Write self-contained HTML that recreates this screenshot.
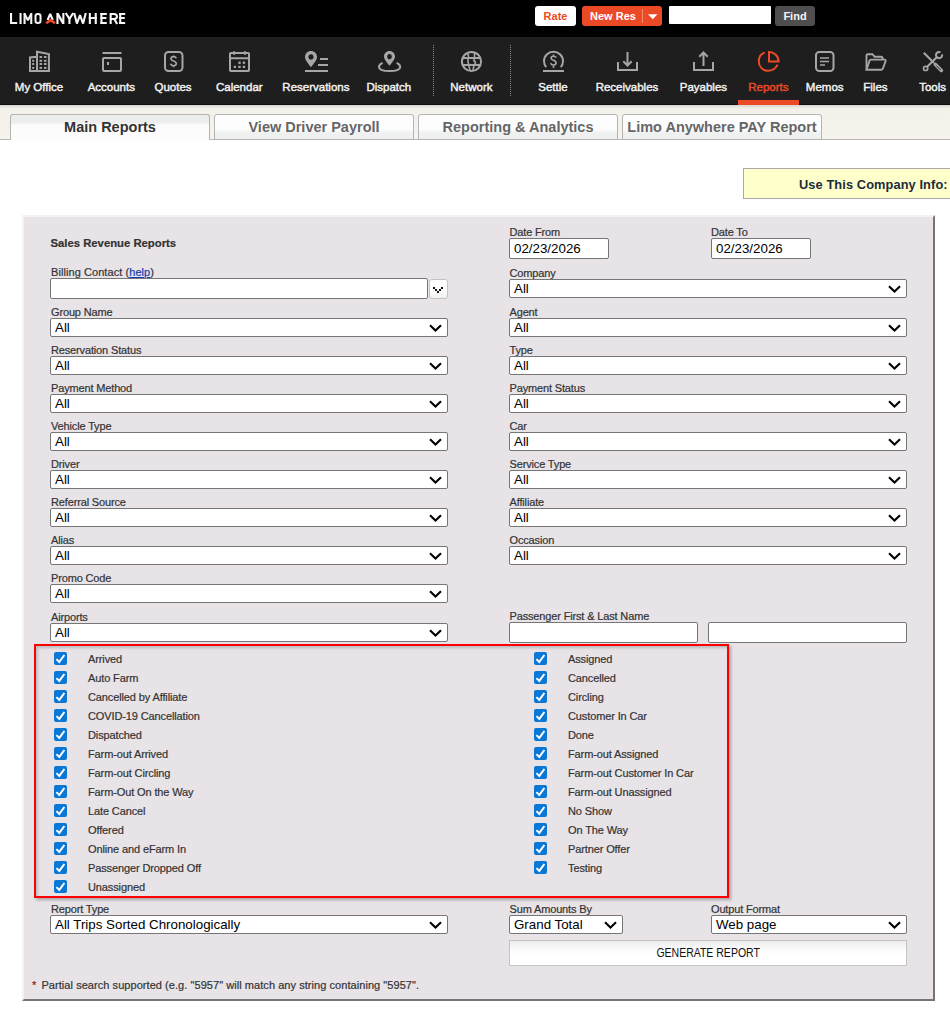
<!DOCTYPE html>
<html><head><meta charset="utf-8"><style>
*{box-sizing:border-box;margin:0;padding:0}
html,body{width:950px;height:1013px;overflow:hidden;background:#fff;font-family:"Liberation Sans",sans-serif}
.a{position:absolute}
.nl{position:absolute;top:80px;width:100px;text-align:center;color:#f3f3f3;font-size:11.5px;line-height:14px;white-space:nowrap;-webkit-text-stroke:0.42px currentColor}
.tab{position:absolute;top:114px;width:200px;height:26px;border:1px solid #b3b3b3;border-radius:3px 3px 0 0;background:linear-gradient(#fdfdfd 0,#fdfdfd 60%,#eff0f0 75%,#eff0f0);font-weight:bold;font-size:14.5px;color:#666;text-align:center;line-height:24px;white-space:nowrap}
.tab.act{border-bottom:none;background:linear-gradient(#eceeee 0,#eceeee 30%,#fcfcfc 40%,#fcfcfc);color:#333}
.lb{position:absolute;font-size:11px;color:#333;line-height:13px;white-space:nowrap;letter-spacing:-0.15px;-webkit-text-stroke:0.2px #333}
.sel{position:absolute;height:19px;background:#fff;border:1px solid #767676;border-radius:2px;font-size:13.333px;color:#000;line-height:17px;padding-left:4px;white-space:nowrap}
.sel svg{position:absolute;right:5px;top:5px}
.inp{position:absolute;height:21px;background:#fff;border:1px solid #767676;border-radius:2px;font-size:13.333px;color:#000;line-height:19px;padding-left:4px}
.cb{position:absolute;width:13px;height:13px;background:#0a77d5;border-radius:2px}
.cb svg{position:absolute;left:0;top:0}
.cl{position:absolute;font-size:11px;color:#333;line-height:13px;white-space:nowrap;letter-spacing:-0.12px;-webkit-text-stroke:0.2px #333}

</style></head><body>
<div class="a" style="left:0;top:0;width:950px;height:37px;background:#000"></div>
<svg class="a" style="left:0;top:0" width="140" height="37">
<g fill="#f6f6f6">
<rect x="10" y="13" width="2.1" height="11"/><rect x="10" y="22" width="7.2" height="2"/>
<rect x="19.5" y="13" width="2.1" height="11"/>
<rect x="23.5" y="13" width="2.1" height="11"/><rect x="30.2" y="13" width="2.1" height="11"/>
<rect x="56.4" y="13" width="2.1" height="11"/><rect x="62.3" y="13" width="2.1" height="11"/>
<rect x="68.4" y="18.5" width="2.1" height="5.5"/>
<rect x="88.8" y="13" width="2.1" height="11"/><rect x="94.7" y="13" width="2.1" height="11"/><rect x="88.8" y="17" width="8" height="2"/>
<rect x="100.4" y="13" width="2.1" height="11"/><rect x="100.4" y="13" width="6.4" height="2"/><rect x="100.4" y="17" width="6" height="2"/><rect x="100.4" y="22" width="6.4" height="2"/>
<rect x="109.6" y="13" width="2.1" height="11"/>
<rect x="119.2" y="13" width="2.1" height="11"/><rect x="119.2" y="13" width="6" height="2"/><rect x="119.2" y="17" width="5.6" height="2"/><rect x="119.2" y="22" width="6" height="2"/>
</g>
<g fill="none" stroke="#f6f6f6" stroke-width="2.1" stroke-linejoin="miter" stroke-miterlimit="1.6">
<path d="M24.6 14 L27.9 20.2 L31.2 14"/>
<rect x="35.5" y="14" width="5" height="9" rx="2.3" stroke-width="2"/>
<path d="M47.6 20 L50.2 13.8 L52.8 20"/>
<path d="M57.6 13.6 L63.2 23.4" stroke-width="2.3"/>
<path d="M65.7 13 L69.45 18.9 L73.2 13"/>
<path d="M74.2 13 L76.9 23.6 L80 15.2 L83.1 23.6 L85.8 13"/>
<path d="M110.6 14 H114 C116.1 14 117 15.1 117 16.5 C117 17.9 116.1 18.9 114 18.9 H110.6" stroke-width="2"/>
<path d="M114.3 19 L117.1 24" stroke-width="2.2"/>
<path d="M46.2 23.3 L50.6 20.1 L55 23.3" stroke="#ec4a26" stroke-width="2.6"/>
</g>
</svg>
<div class="a" style="left:535px;top:6px;width:41px;height:20px;background:#fff;border-radius:3px;color:#ec4a26;font-weight:bold;font-size:11px;line-height:20px;text-align:center">Rate</div>
<div class="a" style="left:582px;top:6px;width:80px;height:20px;background:#ec4a26;border-radius:3px"></div>
<div class="a" style="left:589px;top:6px;width:48px;height:20px;color:#fff;font-weight:bold;font-size:11px;line-height:20px;text-align:center;white-space:nowrap">New Res</div>
<div class="a" style="left:642px;top:9px;width:1px;height:14px;background:#f58a72"></div>
<svg class="a" style="left:647px;top:13px" width="12" height="8"><path d="M1 1.2 H10.5 L5.75 6.2Z" fill="#fff"/></svg>
<div class="a" style="left:669px;top:6px;width:102px;height:18px;background:#fff;border-radius:1px"></div>
<div class="a" style="left:775px;top:6px;width:40px;height:20px;background:#4e4e4e;border-radius:3px;color:#f4f4f4;font-weight:bold;font-size:11px;line-height:20px;text-align:center">Find</div>
<div class="a" style="left:0;top:37px;width:950px;height:68px;background:#1e1e1e;border-bottom:1px solid #0e0e0e"></div>
<div class="nl" style="left:-11.0px;color:#f3f3f3">My Office</div>
<div class="nl" style="left:61.3px;color:#f3f3f3">Accounts</div>
<div class="nl" style="left:123.0px;color:#f3f3f3">Quotes</div>
<div class="nl" style="left:189.3px;color:#f3f3f3">Calendar</div>
<div class="nl" style="left:265.9px;color:#f3f3f3">Reservations</div>
<div class="nl" style="left:338.8px;color:#f3f3f3">Dispatch</div>
<div class="nl" style="left:421.4px;color:#f3f3f3">Network</div>
<div class="nl" style="left:503.0px;color:#f3f3f3">Settle</div>
<div class="nl" style="left:577.0px;color:#f3f3f3">Receivables</div>
<div class="nl" style="left:653.4px;color:#f3f3f3">Payables</div>
<div class="nl" style="left:718.4px;color:#ec4a26">Reports</div>
<div class="nl" style="left:774.7px;color:#f3f3f3">Memos</div>
<div class="nl" style="left:825.4px;color:#f3f3f3">Files</div>
<div class="nl" style="left:882.6px;color:#f3f3f3">Tools</div>
<div class="a" style="left:433px;top:45px;width:1px;height:51px;background:repeating-linear-gradient(#8a8a8a 0 1px,transparent 1px 2px)"></div>
<div class="a" style="left:510px;top:45px;width:1px;height:51px;background:repeating-linear-gradient(#8a8a8a 0 1px,transparent 1px 2px)"></div>
<div class="a" style="left:738px;top:100px;width:61px;height:5px;background:#ec4a26"></div>
<svg class="a" style="left:0;top:0" width="950" height="105" fill="none" stroke="#a6a6a6" stroke-width="2">
<!-- my office -->
<path d="M30 71 V57.5 L37 56.8 M37 71 V51.8 L48.9 54 V71 M29 71 H50"/>
<g fill="#a6a6a6" stroke="none">
<rect x="32.2" y="59.8" width="2" height="2"/><rect x="32.2" y="63" width="2" height="2"/><rect x="32.2" y="66.9" width="2" height="2"/>
<rect x="39.5" y="56" width="2.6" height="2"/><rect x="43.9" y="56" width="2.6" height="2"/>
<rect x="39.5" y="59.8" width="2.6" height="2"/><rect x="43.9" y="59.8" width="2.6" height="2"/>
<rect x="39.5" y="63" width="2.6" height="2"/><rect x="43.9" y="63" width="2.6" height="2"/>
<rect x="39.5" y="66.9" width="2.6" height="2"/><rect x="43.9" y="66.9" width="2.6" height="2"/>
</g>
<!-- accounts -->
<path d="M102.5 53 H121.5"/>
<rect x="103" y="58" width="18" height="13" rx="1"/>
<rect x="107" y="62" width="2" height="3" fill="#a6a6a6" stroke="none"/>
<!-- quotes -->
<rect x="165" y="52" width="17.5" height="19" rx="3.5"/>
<path d="M176.3 58.2 C175.8 56.8 174.8 56.6 173.5 56.6 C171.9 56.6 171 57.5 171 58.8 C171 61.6 176.3 60.4 176.3 63.6 C176.3 65 175.3 65.8 173.6 65.8 C172 65.8 171 65.2 170.6 63.8 M173.6 55.5 V57 M173.6 65.5 V67.2" stroke-width="1.6"/>
<!-- calendar -->
<rect x="230" y="53" width="19" height="18" rx="0.8"/>
<path d="M230 58.3 H249 M234.2 51.2 V54.8 M244.9 51.2 V54.8"/>
<g fill="#a6a6a6" stroke="none">
<rect x="238.3" y="61.6" width="2.4" height="2.3"/><rect x="242.8" y="61.6" width="2.3" height="2.3"/>
<rect x="233.8" y="65.8" width="2.2" height="2.2"/><rect x="238.3" y="65.8" width="2.4" height="2.2"/><rect x="242.8" y="65.8" width="2.3" height="2.2"/>
</g>
<!-- reservations -->
<path fill="#a6a6a6" stroke="none" fill-rule="evenodd" d="M311 51 C314.4 51 317 53.6 317 57 C317 60 313.5 64 311 67.2 C308.5 64 305 60 305 57 C305 53.6 307.6 51 311 51Z M311 54.2 C312.5 54.2 313.6 55.4 313.6 56.9 C313.6 58.4 312.5 59.6 311 59.6 C309.5 59.6 308.4 58.4 308.4 56.9 C308.4 55.4 309.5 54.2 311 54.2Z"/>
<path d="M320 59 H328 M318 65 H328 M305 71 H328"/>
<!-- dispatch -->
<path fill="#a6a6a6" stroke="none" fill-rule="evenodd" d="M389.5 51 C392.6 51 395 53.4 395 56.5 C395 59.4 391.8 62.8 389.5 65.8 C387.2 62.8 384 59.4 384 56.5 C384 53.4 386.4 51 389.5 51Z M389.5 54.1 C390.9 54.1 391.8 55.2 391.8 56.7 C391.8 58.2 390.9 59.3 389.5 59.3 C388.1 59.3 387.2 58.2 387.2 56.7 C387.2 55.2 388.1 54.1 389.5 54.1Z"/>
<path d="M382.6 62.9 C380.2 63.9 379 65.3 379 66.9 C379 69.5 383.8 71 389.6 71 C395.4 71 400.2 69.5 400.2 66.9 C400.2 65.3 399 63.9 396.6 62.9"/>
<!-- network -->
<circle cx="471.5" cy="61.5" r="9.6"/>
<path d="M462.5 58 H480.5 M462.5 65 H480.5" />
<path d="M474.5 52.5 V58 M474 58 V61 C474.8 61 475.5 61.8 475.5 62.6 C475.5 63.5 474.5 64 474 65 L473 70.5 M467.5 53.2 C468.2 55 469 56.2 468.5 58 M468 58 V62.5 C469 63.5 469.2 64.5 468.8 66 C469.5 67.5 470 69 470 70.5" stroke-width="1.6"/>
<!-- settle -->
<path d="M546.2 67.2 C544.8 65.5 544 63.3 544 61 C544 55.8 548.3 51.8 553.5 51.8 C558.7 51.8 563 55.8 563 61 C563 63.3 562.2 65.5 560.8 67.2 M543 71 H564"/>
<path d="M556.2 57.6 C555.7 56.5 554.8 56.2 553.5 56.2 C552 56.2 551.1 57 551.1 58.2 C551.1 60.8 556.1 59.6 556.1 62.8 C556.1 64.2 555.1 65 553.5 65 C552 65 551 64.4 550.7 63.1 M553.5 54.6 V56.2 M553.5 65 V68" stroke-width="1.6"/>
<!-- receivables -->
<path d="M618 62 V70 H637 V62 M627.5 52 V65.5 M623.3 61.3 L627.5 65.5 L631.7 61.3"/>
<!-- payables -->
<path d="M694 62 V70 H713 V62 M703.5 66 V52.5 M699.3 56.7 L703.5 52.5 L707.7 56.7"/>
<!-- reports -->
<path stroke="#ec4a26" d="M764.8 52.6 C760.6 53.8 758.8 57.4 758.8 61.6 C758.8 66.8 762.8 70.8 768 70.8 C772.4 70.8 775.8 68.2 777.6 64.6"/>
<path stroke="#ec4a26" d="M769 52 V61.5 H778.6 C778.6 56.2 774.2 52 769 52Z"/>
<!-- memos -->
<rect x="816" y="52" width="17.5" height="19" rx="3.2"/>
<path d="M820 58 H829 M820 61.5 H829 M820 65 H825" stroke-width="1.6"/>
<!-- files -->
<path d="M866.5 69.5 V55.5 C866.5 54.6 867 54.2 868 54.2 H872.5 L874.6 56.8 H881 C882 56.8 882.6 57.4 882.6 58.4 V59.4" stroke-width="1.9"/>
<path d="M866.5 69.8 L869.5 60.6 C869.8 59.8 870.3 59.6 871 59.6 H884.5 C885.4 59.6 885.9 60.2 885.6 61.1 L883 68.2 C882.7 69.2 882.2 69.8 881 69.8 Z" stroke-width="1.9"/>
<!-- tools -->
<path d="M923.8 52.8 L934 63" stroke-width="2"/>
<path d="M935.4 64.4 L941.4 70.4" stroke-width="3.6" stroke-linecap="round"/>
<path d="M936.2 65.6 L940.6 70" stroke="#1e1e1e" stroke-width="0.9"/>
<path d="M927.2 66.8 L937 57" stroke-width="2"/>
<path d="M942.1 54.4 A3.1 3.1 0 1 1 940.5 52.3" stroke-width="2"/>
<circle cx="925.6" cy="68.4" r="2.1" stroke-width="1.7"/>
</svg>
<div class="a" style="left:0;top:105px;width:950px;height:35px;background:linear-gradient(#d6d3ce 0px,#e9e6e0 2px,#f4f1eb 4px,#f6f3ed 100%);border-bottom:1px solid #b8b8b8"></div>
<div class="tab act" style="left:10px">Main Reports</div>
<div class="tab" style="left:214px">View Driver Payroll</div>
<div class="tab" style="left:418px">Reporting &amp; Analytics</div>
<div class="tab" style="left:622px">Limo Anywhere PAY Report</div>
<div class="a" style="left:743px;top:168px;width:220px;height:31px;background:#ffffcc;border:1px solid #a9a9a9"></div>
<div class="a" style="left:799px;top:178px;font-weight:bold;font-size:12.8px;letter-spacing:0.1px;line-height:14px;color:#1d2b3a;white-space:nowrap">Use This Company Info:</div>
<div class="a" style="left:22px;top:215px;width:913px;height:786px;background:#e7e3e7;border-style:solid;border-width:2px;border-color:#f4f2f4 #777477 #777477 #f4f2f4"></div>
<div class="lb" style="left:50.5px;top:237px;font-weight:bold;font-size:11.3px;letter-spacing:0">Sales Revenue Reports</div>
<div class="lb" style="left:51px;top:266px;letter-spacing:0.07px">Billing Contact (<span style="color:#0c3bb5;-webkit-text-stroke:0.2px #0c3bb5;text-decoration:underline">help</span>)</div>
<div class="inp" style="left:50px;top:278px;width:378px"></div>
<div class="a" style="left:429px;top:279px;width:19px;height:20px;border:1px solid #c3c3c3;border-radius:3px;background:linear-gradient(#fff 50%,#f0f0f0)"></div>
<svg class="a" style="left:433px;top:287px" width="10" height="6" fill="#111"><rect x="0" y="0" width="2" height="2"/><rect x="2" y="2" width="2" height="2"/><rect x="4" y="4" width="2" height="2"/><rect x="6" y="2" width="2" height="2"/><rect x="8" y="0" width="2" height="2"/></svg>
<div class="lb" style="left:51px;top:306px">Group Name</div>
<div class="sel" style="left:50px;top:318px;width:398px">All<svg width="13" height="8" viewBox="0 0 13 8"><path d="M1 1.2 L6.5 6.5 L12 1.2" fill="none" stroke="#000" stroke-width="2.1"/></svg></div>
<div class="lb" style="left:51px;top:344px">Reservation Status</div>
<div class="sel" style="left:50px;top:356px;width:398px">All<svg width="13" height="8" viewBox="0 0 13 8"><path d="M1 1.2 L6.5 6.5 L12 1.2" fill="none" stroke="#000" stroke-width="2.1"/></svg></div>
<div class="lb" style="left:51px;top:382px">Payment Method</div>
<div class="sel" style="left:50px;top:394px;width:398px">All<svg width="13" height="8" viewBox="0 0 13 8"><path d="M1 1.2 L6.5 6.5 L12 1.2" fill="none" stroke="#000" stroke-width="2.1"/></svg></div>
<div class="lb" style="left:51px;top:420px">Vehicle Type</div>
<div class="sel" style="left:50px;top:432px;width:398px">All<svg width="13" height="8" viewBox="0 0 13 8"><path d="M1 1.2 L6.5 6.5 L12 1.2" fill="none" stroke="#000" stroke-width="2.1"/></svg></div>
<div class="lb" style="left:51px;top:458px">Driver</div>
<div class="sel" style="left:50px;top:470px;width:398px">All<svg width="13" height="8" viewBox="0 0 13 8"><path d="M1 1.2 L6.5 6.5 L12 1.2" fill="none" stroke="#000" stroke-width="2.1"/></svg></div>
<div class="lb" style="left:51px;top:496px">Referral Source</div>
<div class="sel" style="left:50px;top:508px;width:398px">All<svg width="13" height="8" viewBox="0 0 13 8"><path d="M1 1.2 L6.5 6.5 L12 1.2" fill="none" stroke="#000" stroke-width="2.1"/></svg></div>
<div class="lb" style="left:51px;top:534px">Alias</div>
<div class="sel" style="left:50px;top:546px;width:398px">All<svg width="13" height="8" viewBox="0 0 13 8"><path d="M1 1.2 L6.5 6.5 L12 1.2" fill="none" stroke="#000" stroke-width="2.1"/></svg></div>
<div class="lb" style="left:51px;top:572px">Promo Code</div>
<div class="sel" style="left:50px;top:584px;width:398px">All<svg width="13" height="8" viewBox="0 0 13 8"><path d="M1 1.2 L6.5 6.5 L12 1.2" fill="none" stroke="#000" stroke-width="2.1"/></svg></div>
<div class="lb" style="left:51px;top:611px">Airports</div>
<div class="sel" style="left:50px;top:623px;width:398px">All<svg width="13" height="8" viewBox="0 0 13 8"><path d="M1 1.2 L6.5 6.5 L12 1.2" fill="none" stroke="#000" stroke-width="2.1"/></svg></div>
<div class="lb" style="left:509.5px;top:226px">Date From</div>
<div class="inp" style="left:509px;top:238px;width:100px">02/23/2026</div>
<div class="lb" style="left:711px;top:226px">Date To</div>
<div class="inp" style="left:711px;top:238px;width:100px">02/23/2026</div>
<div class="lb" style="left:509.5px;top:267px">Company</div>
<div class="sel" style="left:509px;top:279px;width:398px">All<svg width="13" height="8" viewBox="0 0 13 8"><path d="M1 1.2 L6.5 6.5 L12 1.2" fill="none" stroke="#000" stroke-width="2.1"/></svg></div>
<div class="lb" style="left:509.5px;top:306px">Agent</div>
<div class="sel" style="left:509px;top:318px;width:398px">All<svg width="13" height="8" viewBox="0 0 13 8"><path d="M1 1.2 L6.5 6.5 L12 1.2" fill="none" stroke="#000" stroke-width="2.1"/></svg></div>
<div class="lb" style="left:509.5px;top:344px">Type</div>
<div class="sel" style="left:509px;top:356px;width:398px">All<svg width="13" height="8" viewBox="0 0 13 8"><path d="M1 1.2 L6.5 6.5 L12 1.2" fill="none" stroke="#000" stroke-width="2.1"/></svg></div>
<div class="lb" style="left:509.5px;top:382px">Payment Status</div>
<div class="sel" style="left:509px;top:394px;width:398px">All<svg width="13" height="8" viewBox="0 0 13 8"><path d="M1 1.2 L6.5 6.5 L12 1.2" fill="none" stroke="#000" stroke-width="2.1"/></svg></div>
<div class="lb" style="left:509.5px;top:420px">Car</div>
<div class="sel" style="left:509px;top:432px;width:398px">All<svg width="13" height="8" viewBox="0 0 13 8"><path d="M1 1.2 L6.5 6.5 L12 1.2" fill="none" stroke="#000" stroke-width="2.1"/></svg></div>
<div class="lb" style="left:509.5px;top:458px">Service Type</div>
<div class="sel" style="left:509px;top:470px;width:398px">All<svg width="13" height="8" viewBox="0 0 13 8"><path d="M1 1.2 L6.5 6.5 L12 1.2" fill="none" stroke="#000" stroke-width="2.1"/></svg></div>
<div class="lb" style="left:509.5px;top:496px">Affiliate</div>
<div class="sel" style="left:509px;top:508px;width:398px">All<svg width="13" height="8" viewBox="0 0 13 8"><path d="M1 1.2 L6.5 6.5 L12 1.2" fill="none" stroke="#000" stroke-width="2.1"/></svg></div>
<div class="lb" style="left:509.5px;top:534px">Occasion</div>
<div class="sel" style="left:509px;top:546px;width:398px">All<svg width="13" height="8" viewBox="0 0 13 8"><path d="M1 1.2 L6.5 6.5 L12 1.2" fill="none" stroke="#000" stroke-width="2.1"/></svg></div>
<div class="lb" style="left:509.5px;top:610px">Passenger First &amp; Last Name</div>
<div class="inp" style="left:509px;top:622px;width:189px"></div>
<div class="inp" style="left:708px;top:622px;width:199px"></div>
<div class="a" style="left:34px;top:644px;width:695px;height:254px;border:2px solid #ff0000;box-shadow:2px 2px 3px rgba(0,0,0,.28), inset 2px 2px 3px rgba(0,0,0,.18)"></div>
<div class="cb" style="left:54px;top:652px"><svg width="13" height="13"><path d="M2.4 7.1 L5.3 9.9 L10.4 3" fill="none" stroke="#fff" stroke-width="2"/></svg></div>
<div class="cl" style="left:88px;top:653px">Arrived</div>
<div class="cb" style="left:54px;top:671px"><svg width="13" height="13"><path d="M2.4 7.1 L5.3 9.9 L10.4 3" fill="none" stroke="#fff" stroke-width="2"/></svg></div>
<div class="cl" style="left:88px;top:672px">Auto Farm</div>
<div class="cb" style="left:54px;top:690px"><svg width="13" height="13"><path d="M2.4 7.1 L5.3 9.9 L10.4 3" fill="none" stroke="#fff" stroke-width="2"/></svg></div>
<div class="cl" style="left:88px;top:691px">Cancelled by Affiliate</div>
<div class="cb" style="left:54px;top:709px"><svg width="13" height="13"><path d="M2.4 7.1 L5.3 9.9 L10.4 3" fill="none" stroke="#fff" stroke-width="2"/></svg></div>
<div class="cl" style="left:88px;top:710px">COVID-19 Cancellation</div>
<div class="cb" style="left:54px;top:728px"><svg width="13" height="13"><path d="M2.4 7.1 L5.3 9.9 L10.4 3" fill="none" stroke="#fff" stroke-width="2"/></svg></div>
<div class="cl" style="left:88px;top:729px">Dispatched</div>
<div class="cb" style="left:54px;top:747px"><svg width="13" height="13"><path d="M2.4 7.1 L5.3 9.9 L10.4 3" fill="none" stroke="#fff" stroke-width="2"/></svg></div>
<div class="cl" style="left:88px;top:748px">Farm-out Arrived</div>
<div class="cb" style="left:54px;top:766px"><svg width="13" height="13"><path d="M2.4 7.1 L5.3 9.9 L10.4 3" fill="none" stroke="#fff" stroke-width="2"/></svg></div>
<div class="cl" style="left:88px;top:767px">Farm-out Circling</div>
<div class="cb" style="left:54px;top:785px"><svg width="13" height="13"><path d="M2.4 7.1 L5.3 9.9 L10.4 3" fill="none" stroke="#fff" stroke-width="2"/></svg></div>
<div class="cl" style="left:88px;top:786px">Farm-Out On the Way</div>
<div class="cb" style="left:54px;top:804px"><svg width="13" height="13"><path d="M2.4 7.1 L5.3 9.9 L10.4 3" fill="none" stroke="#fff" stroke-width="2"/></svg></div>
<div class="cl" style="left:88px;top:805px">Late Cancel</div>
<div class="cb" style="left:54px;top:823px"><svg width="13" height="13"><path d="M2.4 7.1 L5.3 9.9 L10.4 3" fill="none" stroke="#fff" stroke-width="2"/></svg></div>
<div class="cl" style="left:88px;top:824px">Offered</div>
<div class="cb" style="left:54px;top:842px"><svg width="13" height="13"><path d="M2.4 7.1 L5.3 9.9 L10.4 3" fill="none" stroke="#fff" stroke-width="2"/></svg></div>
<div class="cl" style="left:88px;top:843px">Online and eFarm In</div>
<div class="cb" style="left:54px;top:861px"><svg width="13" height="13"><path d="M2.4 7.1 L5.3 9.9 L10.4 3" fill="none" stroke="#fff" stroke-width="2"/></svg></div>
<div class="cl" style="left:88px;top:862px">Passenger Dropped Off</div>
<div class="cb" style="left:54px;top:880px"><svg width="13" height="13"><path d="M2.4 7.1 L5.3 9.9 L10.4 3" fill="none" stroke="#fff" stroke-width="2"/></svg></div>
<div class="cl" style="left:88px;top:881px">Unassigned</div>
<div class="cb" style="left:534px;top:652px"><svg width="13" height="13"><path d="M2.4 7.1 L5.3 9.9 L10.4 3" fill="none" stroke="#fff" stroke-width="2"/></svg></div>
<div class="cl" style="left:568px;top:653px">Assigned</div>
<div class="cb" style="left:534px;top:671px"><svg width="13" height="13"><path d="M2.4 7.1 L5.3 9.9 L10.4 3" fill="none" stroke="#fff" stroke-width="2"/></svg></div>
<div class="cl" style="left:568px;top:672px">Cancelled</div>
<div class="cb" style="left:534px;top:690px"><svg width="13" height="13"><path d="M2.4 7.1 L5.3 9.9 L10.4 3" fill="none" stroke="#fff" stroke-width="2"/></svg></div>
<div class="cl" style="left:568px;top:691px">Circling</div>
<div class="cb" style="left:534px;top:709px"><svg width="13" height="13"><path d="M2.4 7.1 L5.3 9.9 L10.4 3" fill="none" stroke="#fff" stroke-width="2"/></svg></div>
<div class="cl" style="left:568px;top:710px">Customer In Car</div>
<div class="cb" style="left:534px;top:728px"><svg width="13" height="13"><path d="M2.4 7.1 L5.3 9.9 L10.4 3" fill="none" stroke="#fff" stroke-width="2"/></svg></div>
<div class="cl" style="left:568px;top:729px">Done</div>
<div class="cb" style="left:534px;top:747px"><svg width="13" height="13"><path d="M2.4 7.1 L5.3 9.9 L10.4 3" fill="none" stroke="#fff" stroke-width="2"/></svg></div>
<div class="cl" style="left:568px;top:748px">Farm-out Assigned</div>
<div class="cb" style="left:534px;top:766px"><svg width="13" height="13"><path d="M2.4 7.1 L5.3 9.9 L10.4 3" fill="none" stroke="#fff" stroke-width="2"/></svg></div>
<div class="cl" style="left:568px;top:767px">Farm-out Customer In Car</div>
<div class="cb" style="left:534px;top:785px"><svg width="13" height="13"><path d="M2.4 7.1 L5.3 9.9 L10.4 3" fill="none" stroke="#fff" stroke-width="2"/></svg></div>
<div class="cl" style="left:568px;top:786px">Farm-out Unassigned</div>
<div class="cb" style="left:534px;top:804px"><svg width="13" height="13"><path d="M2.4 7.1 L5.3 9.9 L10.4 3" fill="none" stroke="#fff" stroke-width="2"/></svg></div>
<div class="cl" style="left:568px;top:805px">No Show</div>
<div class="cb" style="left:534px;top:823px"><svg width="13" height="13"><path d="M2.4 7.1 L5.3 9.9 L10.4 3" fill="none" stroke="#fff" stroke-width="2"/></svg></div>
<div class="cl" style="left:568px;top:824px">On The Way</div>
<div class="cb" style="left:534px;top:842px"><svg width="13" height="13"><path d="M2.4 7.1 L5.3 9.9 L10.4 3" fill="none" stroke="#fff" stroke-width="2"/></svg></div>
<div class="cl" style="left:568px;top:843px">Partner Offer</div>
<div class="cb" style="left:534px;top:861px"><svg width="13" height="13"><path d="M2.4 7.1 L5.3 9.9 L10.4 3" fill="none" stroke="#fff" stroke-width="2"/></svg></div>
<div class="cl" style="left:568px;top:862px">Testing</div>
<div class="lb" style="left:51px;top:903px">Report Type</div>
<div class="sel" style="left:50px;top:915px;width:398px">All Trips Sorted Chronologically<svg width="13" height="8" viewBox="0 0 13 8"><path d="M1 1.2 L6.5 6.5 L12 1.2" fill="none" stroke="#000" stroke-width="2.1"/></svg></div>
<div class="lb" style="left:509.5px;top:903px">Sum Amounts By</div>
<div class="sel" style="left:509px;top:915px;width:114px">Grand Total<svg width="13" height="8" viewBox="0 0 13 8"><path d="M1 1.2 L6.5 6.5 L12 1.2" fill="none" stroke="#000" stroke-width="2.1"/></svg></div>
<div class="lb" style="left:711px;top:903px">Output Format</div>
<div class="sel" style="left:711px;top:915px;width:196px">Web page<svg width="13" height="8" viewBox="0 0 13 8"><path d="M1 1.2 L6.5 6.5 L12 1.2" fill="none" stroke="#000" stroke-width="2.1"/></svg></div>
<div class="a" style="left:509px;top:940px;width:398px;height:26px;border:1px solid #c4c4c4;background:linear-gradient(#ececec 0,#fafafa 8px,#fff 14px);font-size:12px;line-height:24px;text-align:center;color:#111"><span style="display:inline-block;transform:scaleX(0.875)">GENERATE REPORT</span></div>
<div class="lb" style="left:32px;top:979px;letter-spacing:0.055px"><span style="color:#d00;margin-right:2px">*</span> Partial search supported (e.g. "5957" will match any string containing "5957".</div>
</body></html>
